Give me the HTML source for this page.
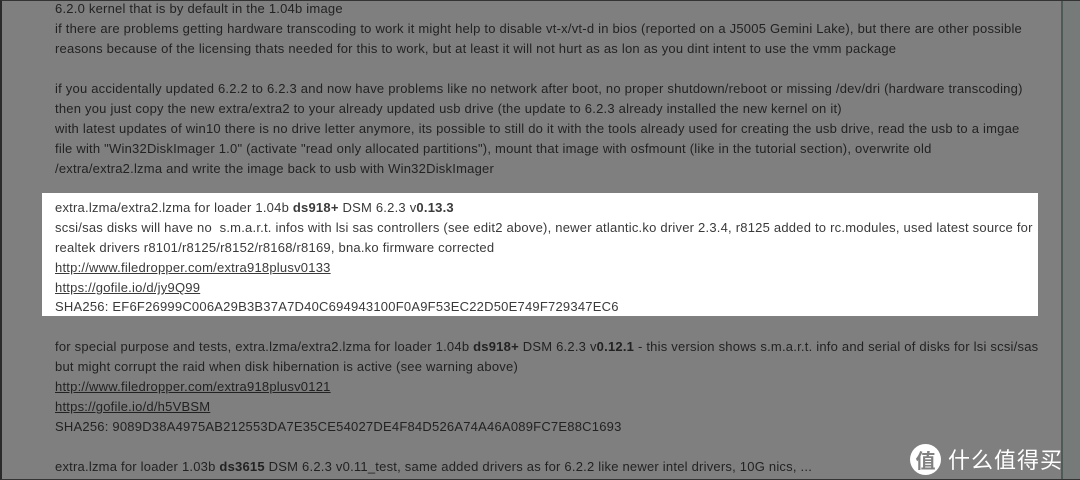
<!DOCTYPE html>
<html><head><meta charset="utf-8"><style>
html,body{margin:0;padding:0;}
body{width:1080px;height:480px;overflow:hidden;background:#7f7f7f;position:relative;font-family:"Liberation Sans",sans-serif;font-size:13px;letter-spacing:0.22px;}
.frame{position:absolute;left:0;top:0;width:1078px;height:478px;border:1px solid #333;border-left:2px solid #2a2a2a;}
.vline{position:absolute;left:1061px;top:0;width:2px;height:480px;background:#4e5a56;}
.right{position:absolute;left:1063px;top:0;width:17px;height:480px;background:#767b79;}
.box{position:absolute;left:42px;top:193px;width:996px;height:123px;background:#fff;}
.l{position:absolute;left:55px;white-space:nowrap;color:#222;line-height:20px;}
.w{color:#3a3a3a;}
a{color:inherit;text-decoration:underline;}
.logo{position:absolute;left:910px;top:440px;color:#fff;font-family:"Noto Sans CJK SC",sans-serif;font-size:22px;letter-spacing:0;white-space:nowrap;}
.logo .c{display:inline-block;width:31px;height:31px;border-radius:50%;background:#fff;color:#808080;text-align:center;line-height:31px;font-size:20px;margin-right:7px;vertical-align:middle;font-weight:bold}
.logo span.t{vertical-align:middle;letter-spacing:1px;}
</style></head><body>
<div class="box"></div>
<div class="l" style="top:-1px">6.2.0 kernel that is by default in the 1.04b image</div>
<div class="l" style="top:19px">if there are problems getting hardware transcoding to work it might help to disable vt-x/vt-d in bios (reported on a J5005 Gemini Lake), but there are other possible</div>
<div class="l" style="top:39px">reasons because of the licensing thats needed for this to work, but at least it will not hurt as as lon as you dint intent to use the vmm package</div>
<div class="l" style="top:79px">if you accidentally updated 6.2.2 to 6.2.3 and now have problems like no network after boot, no proper shutdown/reboot or missing /dev/dri (hardware transcoding)</div>
<div class="l" style="top:99px">then you just copy the new extra/extra2 to your already updated usb drive (the update to 6.2.3 already installed the new kernel on it)</div>
<div class="l" style="top:119px">with latest updates of win10 there is no drive letter anymore, its possible to still do it with the tools already used for creating the usb drive, read the usb to a imgae</div>
<div class="l" style="top:139px">file with "Win32DiskImager 1.0" (activate "read only allocated partitions"), mount that image with osfmount (like in the tutorial section), overwrite old</div>
<div class="l" style="top:159px">/extra/extra2.lzma and write the image back to usb with Win32DiskImager</div>
<div class="l w" style="top:198px">extra.lzma/extra2.lzma for loader 1.04b <b>ds918+</b> DSM 6.2.3 v<b>0.13.3</b></div>
<div class="l w" style="top:218px">scsi/sas disks will have no &nbsp;s.m.a.r.t. infos with lsi sas controllers (see edit2 above), newer atlantic.ko driver 2.3.4, r8125 added to rc.modules, used latest source for</div>
<div class="l w" style="top:238px">realtek drivers r8101/r8125/r8152/r8168/r8169, bna.ko firmware corrected</div>
<div class="l w" style="top:258px"><a>http://www.filedropper.com/extra918plusv0133</a></div>
<div class="l w" style="top:278px"><a>https://gofile.io/d/jy9Q99</a></div>
<div class="l w" style="top:297px">SHA256: EF6F26999C006A29B3B37A7D40C694943100F0A9F53EC22D50E749F729347EC6</div>
<div class="l" style="top:337px">for special purpose and tests, extra.lzma/extra2.lzma for loader 1.04b <b>ds918+</b> DSM 6.2.3 v<b>0.12.1</b> - this version shows s.m.a.r.t. info and serial of disks for lsi scsi/sas</div>
<div class="l" style="top:357px">but might corrupt the raid when disk hibernation is active (see warning above)</div>
<div class="l" style="top:377px"><a>http://www.filedropper.com/extra918plusv0121</a></div>
<div class="l" style="top:397px"><a>https://gofile.io/d/h5VBSM</a></div>
<div class="l" style="top:417px">SHA256: 9089D38A4975AB212553DA7E35CE54027DE4F84D526A74A46A089FC7E88C1693</div>
<div class="l" style="top:457px">extra.lzma for loader 1.03b <b>ds3615</b> DSM 6.2.3 v0.11_test, same added drivers as for 6.2.2 like newer intel drivers, 10G nics, ...</div>
<div class="logo"><span class="c">值</span><span class="t">什么值得买</span></div>
<div class="vline"></div><div class="right"></div>
<div class="frame"></div>
</body></html>
